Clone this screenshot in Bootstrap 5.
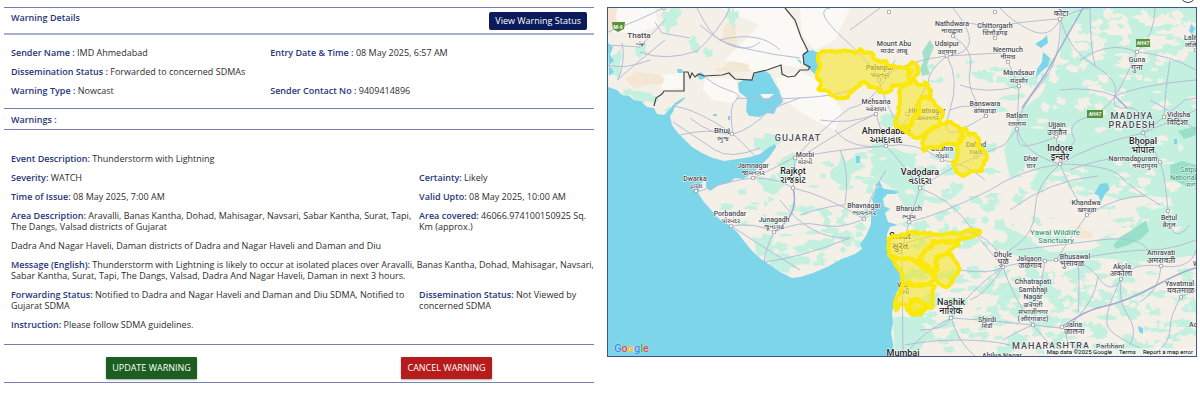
<!DOCTYPE html>
<html lang="en">
<head>
<meta charset="utf-8">
<meta name="viewport" content="width=device-width, initial-scale=1">
<title>Warning Details</title>
<link href="https://cdn.jsdelivr.net/npm/bootstrap@5.3.0/dist/css/bootstrap.min.css" rel="stylesheet">
<style>
  body { font-family: "Open Sans", "Noto Sans", sans-serif; font-size: 9px; line-height: 11px; color: #2d2d2d; background: #fff; }
  .page-grid { display: grid; grid-template-columns: 1fr; gap: 13px; padding: 7px 3px 18px 4px; }
  @media (min-width: 768px) { .page-grid { grid-template-columns: 1fr 1fr; } }
  .panel { border-top: 1px solid #7480ad; }
  .rule { border-bottom: 1px solid #7480ad; }
  .rule-thick { border-bottom: 2px solid #a9b0cc; }
  .inset { padding-left: 7px; padding-right: 7px; }
  .fw-label, .term { font-weight: 600; color: #27367a; }
  .panel-title { font-size: 9px; line-height: 11px; }
  .head-row { height: 27px; padding-top: 4px; }
  .facts { display: grid; row-gap: 8px; margin: 0; }
  .facts p { margin: 0; }
  .sender { grid-template-columns: 9fr 11fr; padding-top: 12px; padding-bottom: 12px; }
  .detail { grid-template-columns: 7fr 3fr; padding: 23px 0 14px 7px; }
  .wide { grid-column: 1 / -1; }
  .subhead { padding-top: 5px; padding-bottom: 4px; }
  .btn { font-size: 9px; line-height: 12px; color: #fff; border: 0; }
  .btn-status { background: #0b1a5b; border-radius: 2px; padding: 3px 6px; }
  .btn-update, .btn-cancel { border-radius: 1px; padding: 5px 6px; box-shadow: 0 1px 2px #0005; }
  .btn-update { background: #1b5e20; }
  .btn-cancel { background: #b71c1c; }
  .actions { padding: 12px 0 3px; }
  .map-frame { border: 1px solid #3d5590; align-self: start; overflow: hidden; }
  .map-frame svg { width: 100%; height: auto; }
  .g-logo { left: 6px; bottom: 1px; font: 500 11px/13px Roboto, sans-serif; text-shadow: 0 0 1px #fff; }
  .credits { right: 0; bottom: 0; background: #f5f5f5b0; font: 6px/8px Roboto, sans-serif; color: #000; padding: 0 3px; gap: 7px; }
  .credits a { color: #000; text-decoration: none; }
  .round-tool { right: 4px; top: -13px; width: 16px; height: 16px; border: 1px solid #444; border-radius: 50%; background: #fff; padding: 0; }
  .city { font-family: Roboto, "Noto Sans", "Noto Sans Gujarati", "DejaVu Sans", sans-serif; font-weight: 500; fill: #4a4b52; stroke: #fff; stroke-width: 1px; paint-order: stroke; stroke-linejoin: round; }
  .state { letter-spacing: 1px; }
</style>
</head>
<body>
<main class="page-grid position-relative">
  <section>
    <div class="panel">
      <header class="head-row rule-thick inset d-flex justify-content-between align-items-start">
        <h1 class="panel-title fw-label m-0">Warning Details</h1>
        <button type="button" class="btn btn-status">View Warning Status</button>
      </header>
      <div class="facts sender inset rule">
        <p><span class="term">Sender Name :</span> IMD Ahmedabad</p>
        <p><span class="term">Entry Date &amp; Time :</span> 08 May 2025, 6:57 AM</p>
        <p class="wide"><span class="term">Dissemination Status :</span> Forwarded to concerned SDMAs</p>
        <p><span class="term">Warning Type :</span> Nowcast</p>
        <p><span class="term">Sender Contact No :</span> 9409414896</p>
      </div>
      <div class="subhead inset rule fw-label">Warnings :</div>
      <div class="facts detail rule">
        <p class="wide"><span class="term">Event Description:</span> Thunderstorm with Lightning</p>
        <p><span class="term">Severity:</span> WATCH</p>
        <p><span class="term">Certainty:</span> Likely</p>
        <p><span class="term">Time of Issue:</span> 08 May 2025, 7:00 AM</p>
        <p><span class="term">Valid Upto:</span> 08 May 2025, 10:00 AM</p>
        <p><span class="term">Area Description:</span> Aravalli, Banas Kantha, Dohad, Mahisagar, Navsari, Sabar Kantha, Surat, Tapi, The Dangs, Valsad districts of Gujarat</p>
        <p><span class="term">Area covered:</span> 46066.974100150925 Sq.<br>Km (approx.)</p>
        <p class="wide">Dadra And Nagar Haveli, Daman districts of Dadra and Nagar Haveli and Daman and Diu</p>
        <p class="wide"><span class="term">Message (English):</span> Thunderstorm with Lightning is likely to occur at isolated places over Aravalli, Banas Kantha, Dohad, Mahisagar, Navsari, Sabar Kantha, Surat, Tapi, The Dangs, Valsad, Dadra And Nagar Haveli, Daman in next 3 hours.</p>
        <p><span class="term">Forwarding Status:</span> Notified to Dadra and Nagar Haveli and Daman and Diu SDMA, Notified to Gujarat SDMA</p>
        <p><span class="term">Dissemination Status:</span> Not Viewed by<br>concerned SDMA</p>
        <p class="wide"><span class="term">Instruction:</span> Please follow SDMA guidelines.</p>
      </div>
      <div class="actions rule row g-0 text-center">
        <div class="col-6"><button type="button" class="btn btn-update">UPDATE WARNING</button></div>
        <div class="col-6"><button type="button" class="btn btn-cancel">CANCEL WARNING</button></div>
      </div>
    </div>
  </section>

  <section class="map-frame position-relative" aria-label="Map of the warned districts">
    <svg class="d-block" viewBox="608 8 588 348" role="img" aria-label="Gujarat and neighbouring states">
      <rect x="600" y="0" width="600" height="360" fill="#f5f0e7"/>
      <!-- pale desert -->
      <path fill="#fbf9f5" d="M608 8H655L658 25 640 33 608 32ZM720 8H785L800 35 806 52 800 68 782 65 755 72 725 60 745 40 760 25ZM705 78L735 79 740 92 735 103 712 100 703 90ZM775 78L800 72 820 80 842 110 835 130 805 115 785 100ZM800 8H850L835 40 815 50 802 35ZM660 76L684 72 683 88 662 90Z"/>
      <g id="patches"></g>
      <!-- sea, gulfs and lakes -->
      <path fill="#7dd5e9" d="M600 86L608 87 617 90 622 95 629 96 634 100 641 101 647 107 654 108 657 114 664 115 671 108 675 103 683 98 686 97 681 102 675 106 673 112 670 116 672 125 677 132 684 139 692 147 702 153 713 158 724 161 738 159 750 157 760 154 768 148 775 144 776 147 770 156 764 162 758 168 752 174 743 179 735 178 729 183 719 185 710 191 706 187 706 181 702 182 698 193 704 202 712 211 719 219 729 225 737 232 744 241 752 251 761 259 770 265 780 272 792 278 800 277 813 273 827 267 842 259 855 254 862 249 860 244 866 236 871 224 871 215 874 206 872 199 876 189 879 186 885 189 893 190 899 192 895 194 887 194 883 198 884 206 890 209 885 213 888 222 898 225 890 227 887 234 887 246 889 255 896 264 900 274 901 284 896 294 894 304 892 313 893 323 891 333 893 343 894 360H600Z"/>
      <path fill="#7dd5e9" d="M738 83L745 79 753 80 755 73 765 71 770 74 774 82 779 90 783 102 777 107 774 114 767 113 760 117 749 116 746 111 747 98 739 92ZM803 53L812 50 819 53 819 68 817 76 809 69 803 63ZM608 43L613 47 610 55 614 61 609 65 614 72 609 76ZM677 69L682 69 683 73 678 73ZM696 74L703 73 705 78 700 80ZM1043 39L1047 35 1048 43 1041 48 1035 44ZM1043 52L1050 58 1048 66 1041 72 1036 78 1037 69 1042 62ZM1100 184L1107 183 1110 189 1105 194 1101 202 1098 195 1094 194ZM875 186L879 181 883 187ZM1191 24L1195 28 1192 34 1189 31ZM1174 139h3v5h-3ZM1138 326L1143 328 1143 334 1139 332ZM856 156h4v7h-4ZM713 114h4v2h-4ZM728 116h2v4h-2ZM796 58l5 3v3Z"/>
      <path fill="#faf7f2" d="M760 94L774 94 769 98 764 99Z"/>
      <path fill="#8ddcc4" d="M930 40L934 47 930 56 927 66 930 74 922 76 920 69 924 60 922 52ZM1113 245L1122 236 1135 228 1146 220 1149 231 1141 239 1128 245 1116 249ZM1170 165L1182 161 1196 165V184L1186 186 1171 179ZM1178 131L1196 126V135L1184 139Z" opacity=".8"/>
      <g id="roads" fill="none" stroke="#b5bdd6" stroke-width="1"></g>
      <!-- national border -->
      <path fill="none" stroke="#45464a" stroke-width="1.2" d="M654 106L656 98 662 94 664 91H684V72L688 72 690 78 692 73 695 77 699 74 704 76 722 75 729 73 735 79 752 80 754 73 767 70 781 65 782 74 788 77 795 76 800 70 808 70 810 67 804 64 803 55 808 51 801 37 795 20 785 8"/>
      <!-- road shields -->
      <g font-family="Roboto, sans-serif" font-size="5" font-weight="700" text-anchor="middle" fill="#fff">
        <path fill="#58923a" d="M612 22H625L624 29 618 32 613 29ZM1136 39H1150V47H1136ZM1087 110H1103V118H1087Z"/>
        <text x="618" y="29">M-9</text><text x="1143" y="45">AH47</text><text x="1095" y="116">AH47</text>
      </g>
      <g id="labels" class="city"></g>
      <!-- warned districts -->
      <g id="districts" fill="#f5e51b" fill-opacity=".55" stroke="#fae80c" stroke-width="4" stroke-linejoin="round"></g>
    </svg>
    <a href="#" class="g-logo position-absolute text-decoration-none" aria-label="Google"><span style="color:#4285f4">G</span><span style="color:#ea4335">o</span><span style="color:#fbbc05">o</span><span style="color:#4285f4">g</span><span style="color:#34a853">l</span><span style="color:#ea4335">e</span></a>
    <div class="credits position-absolute d-flex"><span>Map data ©2025 Google</span><a href="#">Terms</a><a href="#">Report a map error</a></div>
  </section>
  <button type="button" class="round-tool position-absolute" aria-label="Map tools"></button>
</main>
<script src="https://cdn.jsdelivr.net/npm/bootstrap@5.3.0/dist/js/bootstrap.bundle.min.js"></script>
<script>
  // Repeatable noise for vegetation and district outlines.
  let seed = 7;
  const rnd = () => (seed = (seed * 16807) % 2147483647) / 2147483647;
  const blob = (x, y, rx, ry) => {
    let d = '';
    for (let i = 0; i < 14; i++) {
      const a = i / 14 * Math.PI * 2, k = .45 + rnd() * .75;
      d += (i ? 'L' : 'M') + (x + Math.cos(a) * rx * k).toFixed(1) + ' ' + (y + Math.sin(a) * ry * k).toFixed(1);
    }
    return d + 'Z';
  };
  const scatter = (x0, y0, x1, y1, n, r) => {
    let d = '';
    for (let i = 0; i < n; i++) d += blob(x0 + rnd() * (x1 - x0), y0 + rnd() * (y1 - y0), r * (.5 + rnd()), r * (.3 + rnd() * .6));
    return d;
  };
  const GREEN = '#c3f0df', CREAM = '#f5f0e7';
  const layers = [
    ['#f3e6d3', blob(612, 18, 8, 18) + blob(735, 68, 18, 6) + blob(640, 80, 22, 8) + blob(730, 35, 12, 14) + blob(1085, 232, 16, 9) + blob(1135, 14, 16, 5)],
    [GREEN, 'M1062 8H1196V200L1150 196 1120 200 1090 190 1065 190 1040 175 1010 178 1004 150 1018 112 1040 96 1060 60Z'],
    [GREEN, 'M1196 196L1150 205 1130 232 1090 250 1050 252 1015 232 1000 248 1030 262 1100 258 1150 262 1196 255ZM868 150L895 148 915 158 925 185 922 205 905 208 895 190 880 180 872 165ZM893 318L903 316 920 320 930 335 915 356H895Z'],
    [GREEN, blob(670, 20, 12, 14) + blob(693, 45, 6, 11) + blob(732, 17, 6, 12) + blob(708, 53, 5, 7) + blob(642, 50, 6, 8) + blob(616, 64, 6, 16) + blob(645, 97, 14, 7) + blob(628, 92, 8, 4) + blob(768, 142, 14, 9) + blob(790, 163, 12, 12) + blob(770, 185, 14, 10) + blob(765, 245, 12, 16) + blob(785, 262, 14, 10) + blob(820, 245, 14, 6) + blob(845, 170, 14, 16) + blob(890, 120, 12, 9) + blob(668, 110, 4, 5) + blob(987, 76, 10, 7)],
    [GREEN, scatter(780, 150, 870, 265, 44, 7) + scatter(930, 60, 1010, 110, 10, 5) + scatter(985, 60, 1060, 180, 24, 7) + scatter(905, 190, 1000, 250, 36, 7) + scatter(900, 270, 1010, 350, 60, 7) + scatter(1000, 185, 1196, 240, 40, 8) + scatter(1000, 262, 1196, 352, 150, 8) + scatter(725, 190, 780, 230, 12, 5) + scatter(870, 145, 960, 200, 24, 8) + scatter(760, 235, 830, 268, 14, 6)],
    [CREAM, scatter(1070, 12, 1196, 60, 52, 8) + scatter(1040, 60, 1130, 110, 24, 7) + scatter(1130, 60, 1196, 115, 10, 5) + scatter(1010, 105, 1196, 175, 28, 5) + scatter(1000, 170, 1180, 235, 60, 8) + scatter(1010, 262, 1196, 350, 60, 6) + scatter(870, 155, 925, 205, 10, 4)]
  ];
  document.getElementById('patches').innerHTML = layers.map(l => `<path fill="${l[0]}" d="${l[1]}"/>`).join('');

  const roads = [
    'M608 32Q640 20 663 8M622 43Q626 60 618 80M608 45L640 47 665 20M640 52Q665 62 697 51M655 22L662 33 690 38M697 8Q710 35 720 40T752 50 800 58M696 52Q720 30 730 8M617 80Q640 60 665 40',
    'M700 72Q712 85 728 90T736 100 733 134M672 106Q695 108 733 134 750 130 770 110 782 104 800 98M673 122Q700 140 715 150T760 148M690 118Q712 136 733 134M680 135Q706 128 733 134 745 145 757 158M736 98Q760 100 800 98 840 96 855 88',
    'M753 178Q775 168 793 158M753 178Q778 178 793 188 800 215 774 232M697 192Q730 180 753 178M731 226Q755 222 774 232 765 250 764 262M793 188Q825 195 864 219 870 195 886 170M795 158Q830 150 886 146M793 188Q795 170 795 158 820 130 850 108 876 104 895 60',
    'M774 232Q800 220 820 225T864 219M764 262Q800 258 850 238M731 226Q760 245 800 270M840 150Q850 170 845 205M800 158Q840 130 876 114L886 146M886 146Q900 160 920 188L909 222 902 250 903 356M886 146Q915 140 942 160 965 163 985 180M920 188Q945 170 976 157',
    'M895 120Q880 90 879 80T845 40 830 8M879 80Q905 60 947 56T953 8M947 56Q928 70 928 83L910 115 886 146M947 56L1000 53 1008 62 1019 86 1017 129 1004 145 976 157M947 56Q960 80 950 110T960 130 985 116M850 30L880 8M995 38Q985 20 960 24',
    'M920 188Q950 200 965 220T1003 267M909 222Q940 215 990 190 1020 170 1060 164M900 245Q940 230 975 233 1000 245 1003 267M951 318Q970 290 1003 267 1020 262 1045 261T1100 255 1150 250 1196 240M951 318Q925 330 903 356M951 318Q960 345 975 356M951 318Q990 320 1033 325T1062 327',
    'M1060 19Q1040 20 1010 24M1060 19Q1075 10 1090 8M1060 19Q1062 60 1040 85T1017 129 1027 146 1056 137L1060 164M1060 19Q1070 52 1095 66T1115 95 1127 108 1143 133M1090 8Q1090 45 1095 66M1137 52Q1155 35 1155 8M1137 52Q1125 80 1115 96T1085 118 1075 140L1060 164',
    'M1060 164Q1025 155 1017 129M1060 164Q1090 145 1143 133 1170 122 1196 110M1143 133L1164 117 1185 100 1196 98M1060 164Q1110 165 1120 176T1160 205M1143 133Q1155 150 1160 162T1168 211 1190 225M1115 96Q1140 85 1196 80M1060 164Q1035 185 1035 210T1010 250L1003 267M1137 52Q1170 55 1196 70M1060 90Q1090 86 1115 96M1087 215Q1070 190 1060 164M1087 215Q1070 238 1056 260M1087 215Q1120 195 1145 196',
    'M1056 260Q1085 258 1098 277T1121 279 1161 266 1196 250M1121 279Q1118 302 1128 316T1130 345M1062 327Q1085 310 1105 306T1155 286 1196 268M1045 261Q1040 290 1033 325 1050 345 1060 356M1033 325Q1012 295 1003 267M1098 277Q1095 300 1075 320T1080 350M1121 279Q1100 320 1110 330T1145 350M1181 297Q1170 315 1170 330T1150 356M1181 297L1196 290M1161 266Q1160 290 1140 302M1078 258Q1080 290 1078 312M1003 340Q1020 330 1033 325M960 270Q990 275 1003 267M970 300Q985 295 1003 267M920 330Q945 330 951 318M905 345Q930 340 960 340T1010 345M1010 210Q1050 180 1098 176M1017 250Q1060 245 1100 240T1150 252',
    'M608 65Q625 70 650 60M700 25Q740 60 760 42M720 40Q760 30 780 50M820 120Q850 125 876 114M835 130Q850 150 886 146M800 215Q830 205 845 205M780 200Q810 240 850 238M950 110Q975 100 986 116M960 85Q985 95 1019 86M953 36Q975 50 970 70T986 116M1000 8Q1010 20 1030 30T1060 19M1070 170Q1120 150 1160 162M1080 60Q1110 40 1137 52M1150 100Q1170 110 1196 130M1170 60Q1165 90 1164 117'
  ];
  document.getElementById('roads').innerHTML = roads.map(d => `<path d="${d}"/>`).join('') +
    '<path stroke="#a3add0" stroke-width="1.5" d="M1083 8L1062 45 1045 75 1022 108M1062 327Q1085 310 1105 306T1155 286 1196 268M1115 96L1127 108M793 188Q800 215 774 232"/>';

  // District outlines, roughened between their corner points.
  const districts = [
    '818 55 823 51 836 52 848 51 856 53 860 49 865 53 872 53 876 60 884 61 889 66 900 67 908 69 912 71 909 77 911 83 901 86 893 85 890 91 882 92 877 88 869 87 864 82 858 86 852 92 846 98 837 98 829 92 819 90 821 84 817 76 820 68',
    '908 67 912 62 918 67 917 75 912 80 917 84 923 85 926 83 930 89 931 96 922 97 918 104 920 112 914 118 909 128 904 130 896 127 898 115 900 105 899 92 903 86 911 83',
    '922 97 930 99 936 106 943 112 940 119 942 124 934 127 926 133 917 138 909 134 903 128 911 126 914 117 920 112 918 104',
    '942 124 951 122 960 129 963 137 956 145 945 144 940 148 931 147 924 151 922 143 927 133',
    '960 129 966 129 970 135 975 134 979 140 977 145 984 151 987 157 984 164 982 171 973 171 963 176 956 172 953 164 957 158 956 145 963 137',
    '888 239 895 236 904 235 911 232 920 234 930 233 943 235 958 234 965 231 980 231 976 235 962 238 957 241 945 241 933 241 931 247 924 251 920 257 923 264 933 270 924 269 919 263 911 259 901 259 891 257 888 248',
    '920 257 926 249 932 247 934 241 947 243 960 240 956 246 950 250 943 255 936 257 935 264 938 269 930 272 922 264',
    '945 254 951 254 957 263 959 270 954 276 952 283 947 287 940 284 935 280 936 270 935 261',
    '890 256 901 259 913 260 922 267 932 272 934 280 929 284 914 285 903 281 900 271 895 264',
    '903 282 914 286 929 284 935 287 932 294 933 306 926 309 920 315 910 313 907 306 901 304 896 310 896 300 900 292',
    '910 300 918 299 922 303 927 305 921 311 914 313 909 308'
  ];
  const roughen = list => {
    const n = list.split(' ').map(Number), p = [];
    for (let i = 0; i < n.length; i += 2) {
      const x = n[i], y = n[i + 1], u = n[(i + 2) % n.length], v = n[(i + 3) % n.length];
      p.push(`${x} ${y}`);
      [1, 2].forEach(k => p.push(`${(x + (u - x) * k / 3 + (rnd() - .5) * 3).toFixed(1)} ${(y + (v - y) * k / 3 + (rnd() - .5) * 3).toFixed(1)}`));
    }
    return 'M' + p.join('L') + 'Z';
  };
  document.getElementById('districts').innerHTML = districts.map(l => `<path d="${roughen(l)}"/>`).join('');

  // [text, x, baseline, size, anchor]
  const M = 'middle', S = 'start';
  const labels = [
    ['Thatta',639,38,8],['ٹھٹہ',640,45,6],['Bhuj',722,133,8],['ભુજ',723,141,7],['Jamnagar',753,168,7],['જામનગર',753,175,7],
    ['Rajkot',793,174,9],['રાજકોટ',793,183,9],['Morbi',805,157,7],['મોરબી',805,164,6],['Dwarka',695,181,7],['દ્વારકા',696,188,6],
    ['Porbandar',730,216,7],['પોરબંદર',731,223,6],['Junagadh',774,222,7],['જૂનાગઢ',774,229,7],['Bhavnagar',864,208,7],['ભાવનગર',864,215,7],
    ['Bharuch',909,211,7],['ભરૂચ',909,219,7],['Surat',900,239,9],['સુરત',900,249,9],['Vapi',904,287,7],['વાપી',904,294,6],
    ['Vadodara',920,175,9],['વડોદરા',920,184,9],['Ahmedabad',886,134,9],['અમદાવાદ',886,143,9],['Mehsana',876,104,7],['મહેસાણા',876,111,6],
    ['Palanpur',880,70,7],['પાલનપુર',880,77,6],['Mount Abu',894,46,7],['माउंट आबू',894,53,7],['Udaipur',947,46,7],['उदयपुर',947,54,7],
    ['Nathdwara',952,26,7],['नाथद्वारा',952,33,7],['Chittorgarh',995,28,7],['चित्तौड़गढ़',995,35,7],['Neemuch',1008,52,7],['नीमच',1008,59,7],
    ['Mandsaur',1019,75,7],['मंदसौर',1019,83,7],['Banswara',985,106,7],['बांसवाड़ा',985,113,7],['Himatnagar',927,113,7],['હિંમતનગર',927,120,6],
    ['Godhra',942,151,7],['ગોધરા',942,158,6],['Dahod',976,147,7],['દાહોદ',976,154,6],['Ratlam',1017,118,7],['रतलाम',1017,126,7],
    ['Ujjain',1057,127,7],['उज्जैन',1057,135,8],['Indore',1060,151,9],['इन्दौर',1060,160,9],['Dhar',1031,161,7],['धार',1031,168,7],
    ['कोटा',1061,16,8],['Guna',1137,62,7],['गुना',1137,70,8],['Vidisha',1167,117,7,S],['विदिशा',1167,125,8,S],['Bhopal',1143,144,9],
    ['भोपाल',1143,153,9],['Narmadapuram',1133,161,7],['नर्मदापुरम',1145,168,7],['Lalitpur',1184,40,7,S],['ललितपुर',1185,47,7,S],
    ['Khandwa',1086,205,7],['खण्डवा',1087,212,7],['Betul',1169,220,7],['बैतूल',1169,227,7],['Amravati',1161,255,7],['अमरावती',1161,263,8],
    ['Jalgaon',1029,261,7],['जळगांव',1030,268,8],['Bhusawal',1075,259,7],['भुसावळ',1072,266,8],['Dhule',1003,257,7],['धुळे',1003,264,8],
    ['Akola',1122,269,7],['अकोला',1121,276,8],['Yavatmal',1165,286,7,S],['यवतमाळ',1167,293,8,S],['Chhatrapati',1033,284,7],['Sambhaji',1033,292,7],
    ['Nagar',1033,299,7],['छत्रपती',1033,307,7],['संभाजीनगर',1033,314,7],['(औरंगाबाद)',1033,321,7],['Jalna',1065,327,7,S],['जालना',1064,334,8,S],
    ['Nashik',951,305,9],['नाशिक',951,314,9],['Shirdi',987,322,7],['शिर्डी',987,328,6],['Mumbai',903,356,9],['Ahilya Nagar',1002,358,7],
    ['Parbhani',1110,349,7],['Adilabad',1189,327,7,S],['Wardha',1193,266,7,S]
  ];
  const states = [['GUJARAT',798,141,9],['MADHYA',1132,119,9],['PRADESH',1132,128,9],['MAHARASHTRA',1051,349,9]];
  const parks = [['Yawal Wildlife',1055,235,8,M],['Sanctuary',1056,243,8,M],['Satpura',1180,172,7,S],['National Park',1170,180,7,S],['सतपुड़ा',1186,187,6,S]];
  const dots = [[732,134],[753,178],[793,188],[795,158],[696,191],[731,226],[774,232],[864,219],[909,222],[900,252],[920,188],[886,146],[876,114],[879,80],[947,56],[953,36],[995,38],[1008,62],[1019,86],[986,116],[907,114],[942,160],[976,157],[1017,129],[1056,137],[1060,164],[1060,19],[1137,52],[1164,117],[1143,133],[1160,162],[1087,215],[1168,211],[1161,266],[1045,261],[1056,260],[1003,267],[1121,279],[1181,297],[1033,325],[1062,327],[951,318],[1196,50],[664,8],[889,12],[995,12]];
  const text = (t, extra) => `<text x="${t[1]}" y="${t[2]}" font-size="${t[3]}" text-anchor="${t[4] || M}" ${extra}>${t[0]}</text>`;
  document.getElementById('labels').innerHTML =
    dots.map(p => `<circle cx="${p[0]}" cy="${p[1]}" r="1.7" fill="#fff" style="stroke:#555"/>`).join('') +
    labels.map(t => text(t, t[3] > 8 ? 'fill="#222"' : '')).join('') +
    states.map(t => text(t, 'class="state"')).join('') +
    parks.map(t => text(t, 'style="fill:#3c9a7c"')).join('');
</script>
</body>
</html>
